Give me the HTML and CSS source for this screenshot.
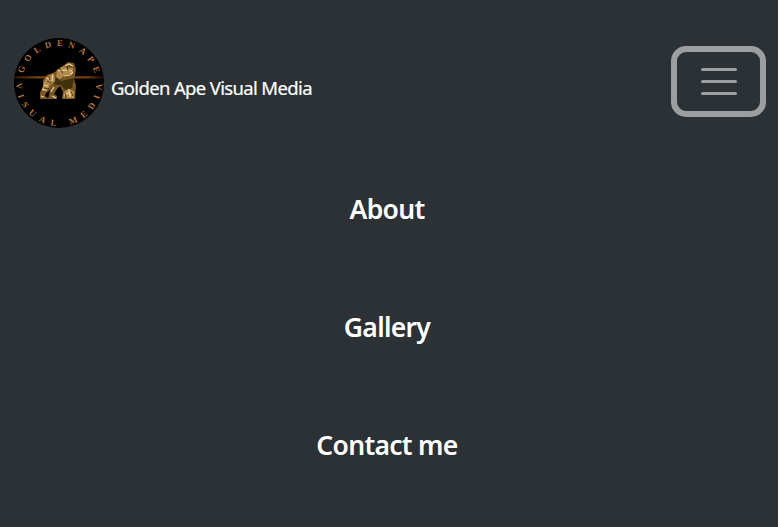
FILE: index.html
```html
<!DOCTYPE html>
<html lang="en">
<head>
<meta charset="utf-8">
<title>Golden Ape Visual Media</title>
<link rel="stylesheet" href="styles.css">
</head>
<body>
<div class="page">
<header class="bar">
<a class="brand">
<svg class="logo" viewBox="0 0 90 90" aria-label="Golden Ape logo">
<defs>
<path id="top" d="M9.3 35.4A37 37 0 0 1 80.7 35.4"/>
<path id="bottom" d="M2 45A43 43 0 0 0 88 45"/>
<linearGradient id="beam"><stop offset="0" stop-color="#291603"/><stop offset=".25" stop-color="#74400f"/><stop offset=".8" stop-color="#74400f"/><stop offset="1" stop-color="#1b0f03"/></linearGradient>
</defs>
<circle cx="45" cy="45" r="45" fill="#020101"/>
<rect x="1" y="38.2" width="88" height="2.3" fill="url(#beam)"/>
<text class="ring"><textPath href="#top" textLength="96">GOLDENAPE</textPath></text>
<text class="ring"><textPath href="#bottom" textLength="134">VISUAL MEDIA</textPath></text>
<path d="M43 32L49 28 54 24 60 25 62 31 61 37 60 42 62 47 61 61H48L49 54 46 48 43 51 40 56 43 58V61H34L36 52 32 55 31 58 34 60V61H26L26 55 29 48 29 42 33 37 41 34Z" fill="#795724"/>
<path d="M43 32L49 28 53 30 59 30 59 36 51 37 46 41 42 40ZM30 43L35 37 40 37 41 43 36 47 33 53 28 53ZM50 54L54 51 60 53 60 60H49Z" fill="#b08a4b"/>
<path d="M42 39L47 43 60 40 58 50 51 52 47 47 40 47Z" fill="#42300e"/>
<path d="M44 33L50 32 58 33M51 28L55 26 59 28M32 40L36 41M39 36L38 43M30 47L34 48M28 51L32 52M40 49L37 54M27 58L30 59M50 57L54 55 58 56M55 51L56 59M50 38L56 37 59 34M38 58L42 60" fill="none" stroke="#ecd091" stroke-width="1.2"/>
<path d="M45 30L49 35M53 28L54 33M33 43L37 45M35 38L36 42M30 50L35 51M51 55L52 60M57 54L59 58" stroke="#302006" stroke-width=".8"/>
</svg>
<span class="name">Golden Ape Visual Media</span>
</a>
<button class="toggle" aria-label="Menu">
<svg class="lines" viewBox="0 0 36 28"><path d="M1.5 2.5H34.5M1.5 14.5H34.5M1.5 26.5H34.5"/></svg>
</button>
</header>
<nav class="menu">
<a class="link about">About</a>
<a class="link gallery">Gallery</a>
<a class="link contact">Contact me</a>
</nav>
</div>
</body>
</html>
```
FILE: styles.css
```css
* { box-sizing: border-box; }
body { margin: 0; background: #fff; font-family: "Noto Sans", sans-serif; color: #fff; }
.page { width: 778px; height: 527px; background: #2c3135; overflow: hidden; }
.bar { display: flex; justify-content: space-between; align-items: flex-start; padding: 38px 12px 0 14px; height: 150px; }
.brand { display: flex; gap: 7px; }
.logo { width: 90px; height: 90px; }
.ring { font-family: "Liberation Serif", serif; font-weight: 700; font-size: 8.8px; fill: #b0753c; }
.name { margin-top: 36px; font-size: 18.5px; line-height: 28px; white-space: nowrap; letter-spacing: -0.65px; -webkit-text-stroke: 0.2px #fff; }
.toggle { width: 95px; height: 71px; margin-top: 8px; padding: 0 0 2px 0; border: 6px solid #9b9fa2; border-radius: 15px; background: none; display: flex; align-items: center; justify-content: center; }
.lines { width: 36px; height: 28px; }
.lines path { stroke: #9b9fa2; stroke-width: 3; stroke-linecap: round; }
.menu { display: flex; flex-direction: column; align-items: center; padding-right: 4px; }
.link { height: 118px; line-height: 118px; font-size: 26.5px; font-weight: 600; letter-spacing: -0.7px; white-space: nowrap; }
```
